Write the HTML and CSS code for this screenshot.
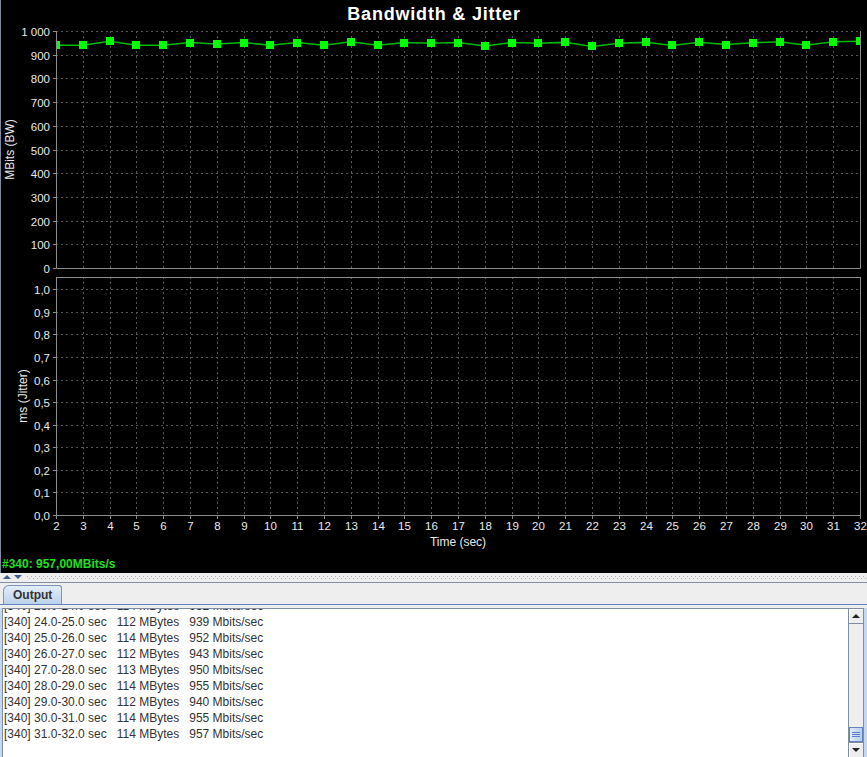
FILE: index.html
```html
<!DOCTYPE html>
<html lang="en">
<head>
  <meta charset="UTF-8" />
  <title>JPerf - Bandwidth &amp; Jitter</title>
  <link rel="stylesheet" href="styles.css">
</head>
<body>
  <div class="app">
    <div class="chart">
      <div class="chart-title">Bandwidth &amp; Jitter</div>
      <svg id="plots" class="plots" width="866" height="527" viewBox="1 28 866 527"></svg>
      <div class="status">#340: 957,00MBits/s</div>
    </div>

    <div class="divider">
      <span class="arrow up"></span>
      <span class="arrow down"></span>
      <div class="bumps"></div>
    </div>

    <div class="tabs">
      <div class="tab active">Output</div>
    </div>

    <div class="tab-body">
      <div class="output">
        <div class="log">
          <div class="log-lines" id="logLines"></div>
        </div>
        <div class="scrollbar">
          <div class="sb-btn sb-up"></div>
          <div class="sb-track">
            <div class="sb-thumb"><i></i><i></i><i></i></div>
          </div>
          <div class="sb-btn sb-down"></div>
        </div>
      </div>
    </div>
  </div>

  <script>
    const NS = 'http://www.w3.org/2000/svg';
    const svg = document.getElementById('plots');
    const logLines = document.getElementById('logLines');

    const left = 56, right = 860;
    const xPos = t => left + (t - 2) * (right - left) / 30;
    const crisp = v => Math.round(v) + 0.5;

    // bandwidth samples, one per second (t = 2..32)
    const bandwidth = [940, 940, 957, 940, 940, 951, 945, 951, 940, 951, 940, 955,
      940, 951, 948, 951, 937, 951, 948, 952, 935, 948, 952, 939, 952, 943, 950,
      955, 940, 955, 957];

    const log = [
      ['23.0-24.0', 114, 952], ['24.0-25.0', 112, 939], ['25.0-26.0', 114, 952],
      ['26.0-27.0', 112, 943], ['27.0-28.0', 113, 950], ['28.0-29.0', 114, 955],
      ['29.0-30.0', 112, 940], ['30.0-31.0', 114, 955], ['31.0-32.0', 114, 957]
    ];

    const plots = [
      {
        top: 31, bottom: 268, yFor: v => 268 - v * 0.237,
        ticks: [0, 100, 200, 300, 400, 500, 600, 700, 800, 900, 1000],
        fmt: v => v === 1000 ? '1 000' : String(v),
        label: 'MBits (BW)', labelX: 14, topBorder: false
      },
      {
        top: 277, bottom: 515, yFor: v => 515 - v * 225.7,
        ticks: [0, .1, .2, .3, .4, .5, .6, .7, .8, .9, 1],
        fmt: v => v.toFixed(1).replace('.', ','),
        label: 'ms (Jitter)', labelX: 27, topBorder: true
      }
    ];

    function el(tag, attrs, text) {
      const node = document.createElementNS(NS, tag);
      for (const [k, v] of Object.entries(attrs)) node.setAttribute(k, v);
      if (text !== undefined) node.textContent = text;
      svg.appendChild(node);
      return node;
    }

    function drawPlot(p) {
      // dashed grid
      for (let t = 3; t <= 31; t++) {
        const x = crisp(xPos(t));
        el('line', { x1: x, x2: x, y1: p.top, y2: p.bottom, class: 'grid' });
      }
      p.ticks.forEach(v => {
        if (v === 0) return;
        const y = crisp(p.yFor(v));
        el('line', { x1: left, x2: right, y1: y, y2: y, class: 'grid' });
      });

      // axes + borders
      const l = left + 0.5, r = right + 0.5, b = p.bottom + 0.5, tp = p.top + 0.5;
      el('line', { x1: l, x2: l, y1: p.top, y2: b, class: 'axis' });
      el('line', { x1: r, x2: r, y1: p.top, y2: b, class: 'axis' });
      el('line', { x1: l, x2: r, y1: b, y2: b, class: 'axis' });
      if (p.topBorder) el('line', { x1: l, x2: r, y1: tp, y2: tp, class: 'axis' });

      // y ticks and labels
      p.ticks.forEach(v => {
        const y = crisp(p.yFor(v));
        el('line', { x1: left - 3, x2: left, y1: y, y2: y, class: 'axis' });
        el('text', { x: 50, y: y + 4, class: 'tick', 'text-anchor': 'end' }, p.fmt(v));
      });

      const my = (p.top + p.bottom) / 2;
      el('text', {
        class: 'axis-label', 'text-anchor': 'middle',
        transform: `translate(${p.labelX},${my}) rotate(-90)`
      }, p.label);
    }

    function drawSeries() {
      const p = plots[0];
      const clip = el('clipPath', { id: 'bwClip' });
      const rect = document.createElementNS(NS, 'rect');
      rect.setAttribute('x', left + 1);
      rect.setAttribute('y', p.top);
      rect.setAttribute('width', right - left - 1);
      rect.setAttribute('height', p.bottom - p.top);
      clip.appendChild(rect);

      const g = el('g', { 'clip-path': 'url(#bwClip)' });
      const pts = bandwidth.map((v, i) => [xPos(i + 2), p.yFor(v)]);
      const line = document.createElementNS(NS, 'polyline');
      line.setAttribute('points', pts.map(pt => pt.join(',')).join(' '));
      line.setAttribute('class', 'series');
      g.appendChild(line);
      pts.forEach(([x, y]) => {
        const sq = document.createElementNS(NS, 'rect');
        sq.setAttribute('x', Math.round(x - 4));
        sq.setAttribute('y', Math.round(y - 4));
        sq.setAttribute('width', 8);
        sq.setAttribute('height', 8);
        sq.setAttribute('class', 'point');
        g.appendChild(sq);
      });
    }

    function drawTimeAxis() {
      for (let t = 2; t <= 32; t++) {
        const x = crisp(xPos(t));
        el('line', { x1: x, x2: x, y1: 515, y2: 519, class: 'axis' });
        el('text', { x: x, y: 529.5, class: 'tick', 'text-anchor': 'middle' }, String(t));
      }
      el('text', { x: 458, y: 546, class: 'axis-label', 'text-anchor': 'middle' }, 'Time (sec)');
    }

    function renderLog() {
      log.forEach(([span, mbytes, mbits]) => {
        const row = document.createElement('div');
        row.className = 'log-row';
        row.textContent = `[340] ${span} sec   ${mbytes} MBytes   ${mbits} Mbits/sec`;
        logLines.appendChild(row);
      });
    }

    plots.forEach(drawPlot);
    drawSeries();
    drawTimeAxis();
    renderLog();
  </script>
</body>
</html>
```

FILE: styles.css
```css
html, body {
  margin: 0; padding: 0; height: 757px; overflow: hidden;
  background: #eeeeee; font-family: "Liberation Sans", Arial, sans-serif;
}
.app {
  display: flex; flex-direction: column; height: 757px; overflow: hidden;
}

/* chart panel */
.chart {
  background: #000; border-left: 1px solid #7d8aa0;
  height: 573px; flex: none;
}
.chart-title {
  height: 28px; line-height: 28px; text-align: center;
  color: #fff; font-weight: 700; font-size: 18px; letter-spacing: 0.8px;
}
.plots { display: block; overflow: visible; }
.plots .grid { stroke: #575757; stroke-width: 1; stroke-dasharray: 2 3; }
.plots .axis { stroke: #8c8c8c; stroke-width: 1; }
.plots .tick { fill: #e8e8e8; font-size: 11.5px; font-family: "Liberation Sans", Arial, sans-serif; }
.plots .axis-label { fill: #e8e8e8; font-size: 12px; font-family: "Liberation Sans", Arial, sans-serif; }
.plots .series { fill: none; stroke: #00bb00; stroke-width: 1.5; }
.plots .point { fill: #00ff00; }
.status {
  height: 17px; padding: 1px 0 0 1px; line-height: 17px;
  color: #1fe01f; font-weight: 700; font-size: 12px;
}

/* split pane divider */
.divider {
  display: flex; align-items: flex-start; gap: 3px;
  height: 7px; padding: 2px 0 0 3px;
  border-bottom: 1px solid #8190a8; flex: none;
}
.arrow { width: 0; height: 0; border-left: 4px solid transparent; border-right: 4px solid transparent; }
.arrow.up { border-bottom: 4px solid #3f5d8f; }
.arrow.down { border-top: 4px solid #3f5d8f; margin-right: 2px; }
.bumps {
  flex: 1; height: 3px; margin-top: 1px;
  background:
    repeating-linear-gradient(90deg, #a5adba 0 1px, transparent 1px 4px) top / 100% 1px no-repeat,
    repeating-linear-gradient(90deg, transparent 0 2px, #a5adba 2px 3px, transparent 3px 4px) bottom / 100% 1px no-repeat;
}

/* tabs */
.tabs {
  display: flex; align-items: flex-end;
  height: 21px; padding-left: 3px; flex: none;
}
.tab {
  height: 18px; line-height: 18px; padding: 0 9px;
  border: 1px solid #7b93bd; border-bottom: none;
  border-radius: 6px 3px 0 0;
  font-size: 12px; font-weight: 700; color: #333;
}
.tab.active { background: linear-gradient(#e3edf9, #bcd2ec); }
.tab-body {
  flex: 1; min-height: 0; display: flex; flex-direction: column;
  border-top: 1px solid #6382bf; padding-top: 3px;
}

/* output text area */
.output {
  flex: 1; display: flex; min-height: 0;
  background: #fff; border: 1px solid #7f8da3; border-bottom: none;
  box-shadow: -2px 0 0 #c6d8ee, 3px 0 0 #c6d8ee;
  margin: 0 3px 0 2px;
}
.log {
  flex: 1; overflow: hidden; padding-left: 1px;
  font-size: 12px; line-height: 16px; color: #333;
}
.log-lines { margin-top: -11px; }
.log-row { white-space: pre; }

/* scrollbar */
.scrollbar {
  width: 14px; display: flex; flex-direction: column;
  border-left: 1px solid #7f8da3; background: #eeeeee;
}
.sb-btn {
  position: relative; flex: none;
  box-shadow: inset 1px 1px 0 #fff;
}
.sb-up { border-bottom: 1px solid #7f8da3; height: 14px; }
.sb-down { border-top: 1px solid #7f8da3; height: 14px; }
.sb-btn::after {
  content: ""; position: absolute; left: 3px; top: 5px;
  border-left: 4px solid transparent; border-right: 4px solid transparent;
}
.sb-up::after { border-bottom: 4px solid #222; }
.sb-down::after { border-top: 4px solid #222; }
.sb-track {
  flex: 1; display: flex; flex-direction: column; justify-content: flex-end;
}
.sb-thumb {
  height: 13px; border: 1px solid #6382bf;
  background: linear-gradient(90deg, #dfeafa, #b8cfee);
  display: flex; flex-direction: column; justify-content: center; gap: 1px;
  padding: 0 2px;
}
.sb-thumb i { display: block; height: 1px; background: #5b7fc4; }
```
